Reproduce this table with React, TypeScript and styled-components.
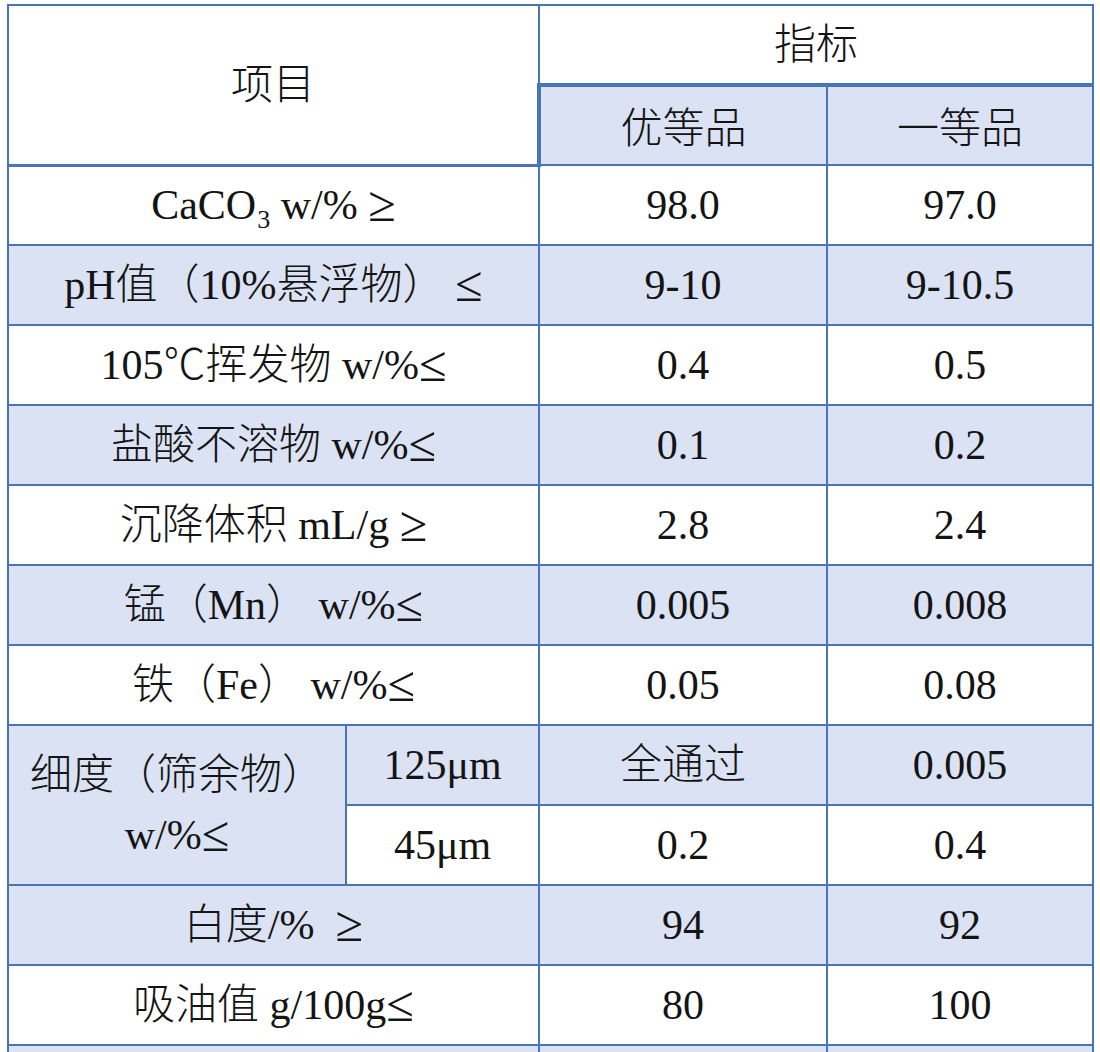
import styled, { createGlobalStyle } from 'styled-components';
import { ReactNode } from 'react';

const LINE = '#4775b6';
const FILL = '#dae2f3';

const GlobalStyle = createGlobalStyle`
  html, body {
    margin: 0;
    padding: 0;
    background: #ffffff;
  }
`;

const Page = styled.div`
  padding: 4px 0 0 7px;
  height: 1052px;
  overflow: hidden;
  box-sizing: border-box;
`;

const Table = styled.table`
  width: 1085px;
  table-layout: fixed;
  border-collapse: collapse;
  border-left: 2px solid #4b6c9e;
  font-family: 'Liberation Serif', 'Noto Sans CJK SC', serif;
  font-size: 42px;
  color: #141414;

  tr {
    height: 80px;
  }
`;

const Cell = styled.td<{
  $fill?: boolean;
  $thickTop?: boolean;
  $thickLeft?: boolean;
  $thickBottom?: boolean;
  $low?: boolean;
}>`
  padding: ${(p) => (p.$low ? '6px 0 0' : '0')};
  text-align: center;
  vertical-align: middle;
  white-space: pre;
  line-height: 1;
  background: ${(p) => (p.$fill ? FILL : '#ffffff')};
  border: 2px solid ${LINE};
  border-top-width: ${(p) => (p.$thickTop ? '4px' : '2px')};
  border-left-width: ${(p) => (p.$thickLeft ? '4px' : '2px')};
  border-bottom-width: ${(p) => (p.$thickBottom ? '3px' : '2px')};
  font-weight: 300;
`;

const Stacked = styled.div`
  line-height: 60px;
  text-align: center;
`;

const Sub = styled.span`
  font-size: 0.62em;
  vertical-align: -0.32em;
  line-height: 0;
  margin-left: 1px;
`;

// relation sign (≥ / ≤), drawn a bit larger than the body text
const Rel = styled.span`
  font-size: 1.2em;
  line-height: 0;
  vertical-align: -0.04em;
`;

type Row = { label: ReactNode; top: string; first: string };

const before: Row[] = [
  { label: <>CaCO<Sub>3</Sub> w/% <Rel>≥</Rel></>, top: '98.0', first: '97.0' },
  { label: <>pH值（10%悬浮物） <Rel>≤</Rel></>, top: '9-10', first: '9-10.5' },
  { label: <>105℃挥发物 w/%<Rel>≤</Rel></>, top: '0.4', first: '0.5' },
  { label: <>盐酸不溶物 w/%<Rel>≤</Rel></>, top: '0.1', first: '0.2' },
  { label: <>沉降体积 mL/g <Rel>≥</Rel></>, top: '2.8', first: '2.4' },
  { label: <>锰（Mn） w/%<Rel>≤</Rel></>, top: '0.005', first: '0.008' },
  { label: <>铁（Fe） w/%<Rel>≤</Rel></>, top: '0.05', first: '0.08' },
];

const after: Row[] = [
  { label: <>白度/%  <Rel>≥</Rel></>, top: '94', first: '92' },
  { label: <>吸油值 g/100g<Rel>≤</Rel></>, top: '80', first: '100' },
  { label: '', top: '', first: '' },
];

const DataRow = ({ row, fill }: { row: Row; fill: boolean }) => (
  <tr>
    <Cell colSpan={2} $fill={fill}>
      {row.label}
    </Cell>
    <Cell $fill={fill}>{row.top}</Cell>
    <Cell $fill={fill}>{row.first}</Cell>
  </tr>
);

export default function App() {
  return (
    <>
      <GlobalStyle />
      <Page>
        <Table>
          <colgroup>
            <col style={{ width: 338 }} />
            <col style={{ width: 193 }} />
            <col style={{ width: 288 }} />
            <col style={{ width: 266 }} />
          </colgroup>
          <tbody>
            <tr>
              <Cell colSpan={2} rowSpan={2} $thickBottom>
                项目
              </Cell>
              <Cell colSpan={2}>指标</Cell>
            </tr>
            <tr>
              <Cell $fill $thickTop $thickLeft $low>
                优等品
              </Cell>
              <Cell $fill $thickTop $low>
                一等品
              </Cell>
            </tr>

            {before.map((row, i) => (
              <DataRow key={i} row={row} fill={i % 2 === 1} />
            ))}

            <tr>
              <Cell rowSpan={2} $fill>
                <Stacked>
                  细度（筛余物）
                  <br />
                  w/%<Rel>≤</Rel>
                </Stacked>
              </Cell>
              <Cell $fill>125μm</Cell>
              <Cell $fill>全通过</Cell>
              <Cell $fill>0.005</Cell>
            </tr>
            <tr>
              <Cell>45μm</Cell>
              <Cell>0.2</Cell>
              <Cell>0.4</Cell>
            </tr>

            {after.map((row, i) => (
              <DataRow key={i} row={row} fill={i % 2 === 0} />
            ))}
          </tbody>
        </Table>
      </Page>
    </>
  );
}
